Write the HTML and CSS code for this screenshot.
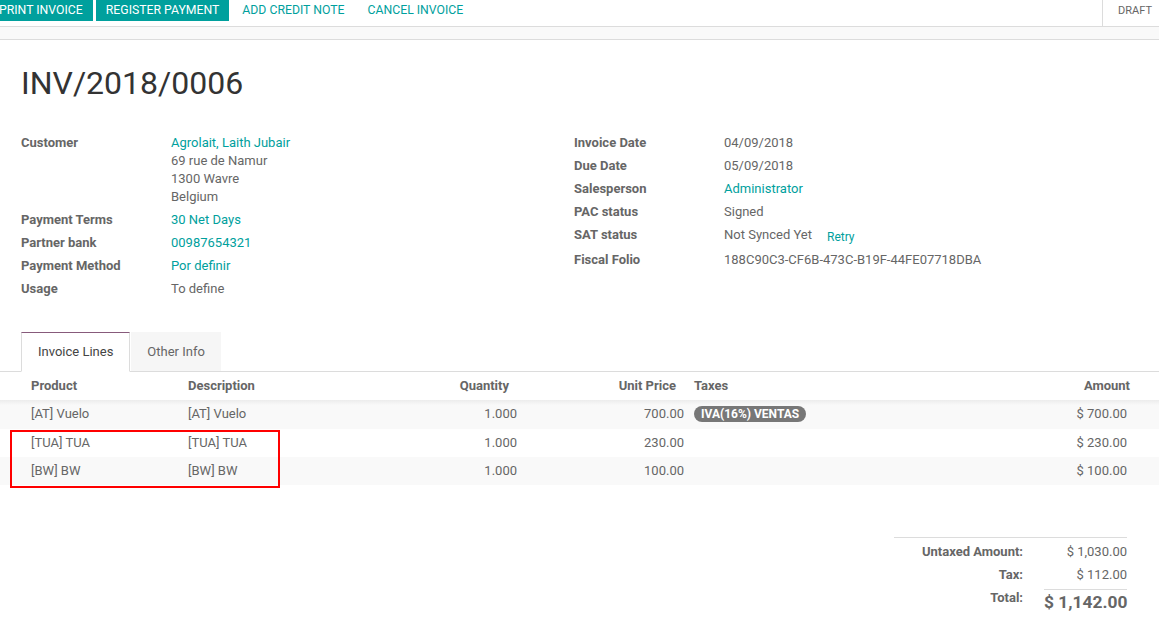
FILE: index.html
```html
<!DOCTYPE html>
<html>
<head>
<meta charset="utf-8">
<link rel="stylesheet" href="styles.css">
</head>
<body>
<div class="statusbar">
  <div class="actions">
    <span class="btn btn-primary">PRINT INVOICE</span>
    <span class="btn btn-primary">REGISTER PAYMENT</span>
    <span class="btn btn-link">ADD CREDIT NOTE</span>
    <span class="btn btn-link">CANCEL INVOICE</span>
  </div>
  <div class="states"><span class="state">DRAFT</span></div>
</div>
<div class="band"></div>
<div class="sheet">
  <h1 class="title">INV/2018/0006</h1>
  <div class="groups">
    <div class="group">
      <div class="field"><div class="label">Customer</div><div class="value"><span class="link">Agrolait, Laith Jubair</span><br>69 rue de Namur<br>1300 Wavre<br>Belgium</div></div>
      <div class="field"><div class="label">Payment Terms</div><div class="value link">30 Net Days</div></div>
      <div class="field"><div class="label">Partner bank</div><div class="value link">00987654321</div></div>
      <div class="field"><div class="label">Payment Method</div><div class="value link">Por definir</div></div>
      <div class="field"><div class="label">Usage</div><div class="value">To define</div></div>
    </div>
    <div class="group">
      <div class="field"><div class="label">Invoice Date</div><div class="value">04/09/2018</div></div>
      <div class="field"><div class="label">Due Date</div><div class="value">05/09/2018</div></div>
      <div class="field"><div class="label">Salesperson</div><div class="value link">Administrator</div></div>
      <div class="field"><div class="label">PAC status</div><div class="value">Signed</div></div>
      <div class="field"><div class="label">SAT status</div><div class="value">Not Synced Yet<span class="retry">Retry</span></div></div>
      <div class="field"><div class="label">Fiscal Folio</div><div class="value">188C90C3-CF6B-473C-B19F-44FE07718DBA</div></div>
    </div>
  </div>
</div>
<div class="tabs">
  <span class="tab active">Invoice Lines</span>
  <span class="tab">Other Info</span>
</div>
<div class="lines">
  <table class="grid">
    <colgroup>
      <col class="c-prod"><col class="c-desc"><col class="c-qty"><col class="c-price"><col class="c-tax"><col class="c-amt">
    </colgroup>
    <thead>
      <tr>
        <th class="prod">Product</th>
        <th>Description</th>
        <th class="num qty">Quantity</th>
        <th class="num price">Unit Price</th>
        <th>Taxes</th>
        <th class="num amt">Amount</th>
      </tr>
    </thead>
    <tbody>
      <tr>
        <td class="prod">[AT] Vuelo</td><td>[AT] Vuelo</td><td class="num qty">1.000</td><td class="num price">700.00</td><td><span class="badge">IVA(16%) VENTAS</span></td><td class="num amt">$ 700.00</td>
      </tr>
      <tr>
        <td class="prod">[TUA] TUA</td><td>[TUA] TUA</td><td class="num qty">1.000</td><td class="num price">230.00</td><td></td><td class="num amt">$ 230.00</td>
      </tr>
      <tr>
        <td class="prod">[BW] BW</td><td>[BW] BW</td><td class="num qty">1.000</td><td class="num price">100.00</td><td></td><td class="num amt">$ 100.00</td>
      </tr>
    </tbody>
  </table>
  <div class="highlight"></div>
</div>
<div class="totals-wrap">
  <div class="totals">
    <div class="t-label">Untaxed Amount:</div><div class="t-value">$ 1,030.00</div>
    <div class="t-label">Tax:</div><div class="t-value">$ 112.00</div>
    <div class="t-label">Total:</div><div class="t-value total">$ 1,142.00</div>
  </div>
</div>
</body>
</html>
```
FILE: styles.css
```css
html, body {
  margin: 0;
  padding: 0;
  background: #fff;
}
body {
  font-family: Roboto, "Liberation Sans", sans-serif;
  font-size: 13px;
  line-height: 18px;
  color: #666;
  overflow: hidden;
}

/* status bar */
.statusbar {
  display: flex;
  justify-content: space-between;
  align-items: flex-start;
  height: 26px;
  border-bottom: 1px solid #dcdcdc;
}
.actions {
  display: flex;
  gap: 3px;
  margin-left: -11px;
}
.btn {
  display: block;
  height: 21px;
  line-height: 21px;
  padding: 0 10px;
  font-size: 12.25px;
}
.btn-primary {
  background: #00a09d;
  color: #fff;
}
.btn-link {
  color: #00a09d;
}
.states {
  height: 26px;
  border-left: 1px solid #dcdcdc;
  padding: 0 7px 0 15px;
}
.state {
  display: block;
  font-size: 11px;
  line-height: 21px;
  color: #666;
}
.band {
  height: 12px;
  background: #f9f9f9;
  border-bottom: 1px solid #dcdcdc;
}

/* sheet */
.sheet {
  padding: 24px 21px 0;
}
.title {
  margin: 0;
  font-size: 32px;
  line-height: 38px;
  font-weight: 400;
  color: #333;
}
.groups {
  display: grid;
  grid-template-columns: 532px 1fr;
  column-gap: 21px;
  margin-top: 32px;
}
.field {
  display: flex;
  padding-bottom: 5px;
}
.label {
  width: 150px;
  flex: none;
  font-weight: 700;
  color: #666;
}
.value {
  color: #666;
}
.link {
  color: #00a09d;
}
.retry {
  color: #00a09d;
  margin-left: 15px;
  font-size: 12px;
  vertical-align: -2px;
}

/* tabs */
.tabs {
  display: flex;
  gap: 1px;
  margin-top: 29px;
  padding-left: 21px;
  border-bottom: 1px solid #dcdcdc;
}
.tab {
  display: block;
  padding: 10px 16px;
  line-height: 18px;
  border-top: 1px solid transparent;
  background: #f6f6f6;
  color: #666;
  margin-bottom: -1px;
  border-bottom: 1px solid #dcdcdc;
}
.tab.active {
  background: #fff;
  color: #444;
  border: 1px solid #dcdcdc;
  border-top-color: #875a7b;
  border-bottom-color: #fff;
  padding: 10px 16px;
}

/* lines table */
.lines {
  position: relative;
}
.grid {
  width: 100%;
  table-layout: fixed;
  border-collapse: collapse;
}
.c-prod { width: 180px; }
.c-desc { width: 250px; }
.c-qty { width: 95px; }
.c-price { width: 161px; }
.c-tax { width: 300px; }
.c-amt { width: auto; }
.grid th, .grid td {
  padding: 5px 8px;
  height: 18px;
  line-height: 18px;
  text-align: left;
  white-space: nowrap;
  color: #666;
}
.grid th {
  font-weight: 700;
}
.grid tbody tr:first-child td {
  padding-bottom: 6px;
}
.grid .prod { padding-left: 31px; }
.grid .num { text-align: right; }
.grid th.qty { padding-right: 16px; }
.grid td.price { padding-right: 2px; }
.grid th.price { padding-right: 10px; }
.grid td.amt { padding-right: 32px; }
.grid th.amt { padding-right: 29px; }
.grid tbody tr:nth-child(odd) td {
  background: #f9f9f9;
}
.grid tbody tr:first-child td {
  background: linear-gradient(#ececec, #f9f9f9 5px);
}
.badge {
  display: inline-block;
  background: #777;
  color: #fff;
  font-weight: 700;
  font-size: 12px;
  line-height: 16px;
  padding: 0 7px;
  border-radius: 8px;
}
.highlight {
  position: absolute;
  left: 10px;
  top: 58px;
  width: 266px;
  height: 54px;
  border: 2px solid #f00;
}

/* totals */
.totals-wrap {
  display: flex;
  justify-content: flex-end;
  padding-right: 32px;
  margin-top: 52px;
}
.totals {
  display: grid;
  grid-template-columns: 129px 83px;
  column-gap: 21px;
  width: 233px;
  border-top: 1px solid #dcdcdc;
  padding-top: 5px;
}
.t-label {
  text-align: right;
  font-weight: 700;
  padding-bottom: 5px;
  white-space: nowrap;
}
.t-value {
  text-align: right;
  padding-bottom: 5px;
  white-space: nowrap;
}
.t-value.total {
  border-top: 1px solid #dcdcdc;
  font-size: 17.4px;
  line-height: 24px;
  font-weight: 700;
}
```
